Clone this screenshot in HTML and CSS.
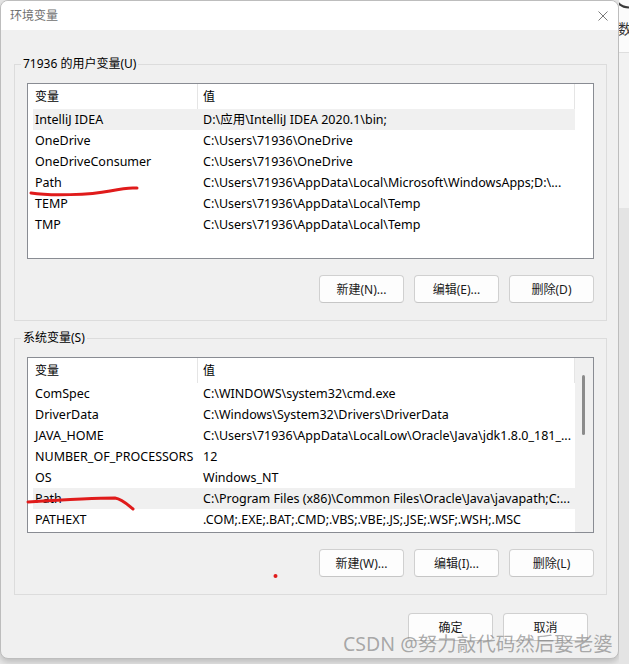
FILE: index.html
```html
<!DOCTYPE html>
<html lang="zh-CN">
<head>
<meta charset="utf-8">
<title>环境变量</title>
<link rel="stylesheet" href="styles.css">
</head>
<body>
<div class="screen">
  <div class="window">
    <div class="titlebar">
      <span class="title">环境变量</span>
      <svg class="close" width="10" height="10" viewBox="0 0 10 10"><path d="M0.5 0.5L9.5 9.5M9.5 0.5L0.5 9.5" stroke="#7a7a7a" stroke-width="1" fill="none"/></svg>
    </div>
    <div class="content">
      <fieldset class="group">
        <legend>71936 的用户变量(U)</legend>
        <div class="listbox">
          <div class="table">
            <div class="head"><div class="hc">变量</div><div class="hc">值</div></div>
            <div class="row sel"><div class="c1">IntelliJ IDEA</div><div class="c2">D:\应用\IntelliJ IDEA 2020.1\bin;</div></div>
            <div class="row"><div class="c1">OneDrive</div><div class="c2">C:\Users\71936\OneDrive</div></div>
            <div class="row"><div class="c1">OneDriveConsumer</div><div class="c2">C:\Users\71936\OneDrive</div></div>
            <div class="row"><div class="c1">Path</div><div class="c2">C:\Users\71936\AppData\Local\Microsoft\WindowsApps;D:\...</div></div>
            <div class="row"><div class="c1">TEMP</div><div class="c2">C:\Users\71936\AppData\Local\Temp</div></div>
            <div class="row"><div class="c1">TMP</div><div class="c2">C:\Users\71936\AppData\Local\Temp</div></div>
          </div>
          <div class="gutter"></div>
        </div>
        <div class="buttons">
          <button class="btn">新建(N)...</button>
          <button class="btn">编辑(E)...</button>
          <button class="btn">删除(D)</button>
        </div>
      </fieldset>
      <fieldset class="group">
        <legend>系统变量(S)</legend>
        <div class="listbox">
          <div class="table">
            <div class="head"><div class="hc">变量</div><div class="hc">值</div></div>
            <div class="row"><div class="c1">ComSpec</div><div class="c2">C:\WINDOWS\system32\cmd.exe</div></div>
            <div class="row"><div class="c1">DriverData</div><div class="c2">C:\Windows\System32\Drivers\DriverData</div></div>
            <div class="row"><div class="c1">JAVA_HOME</div><div class="c2">C:\Users\71936\AppData\LocalLow\Oracle\Java\jdk1.8.0_181_...</div></div>
            <div class="row"><div class="c1">NUMBER_OF_PROCESSORS</div><div class="c2">12</div></div>
            <div class="row"><div class="c1">OS</div><div class="c2">Windows_NT</div></div>
            <div class="row sel"><div class="c1">Path</div><div class="c2">C:\Program Files (x86)\Common Files\Oracle\Java\javapath;C:...</div></div>
            <div class="row"><div class="c1">PATHEXT</div><div class="c2">.COM;.EXE;.BAT;.CMD;.VBS;.VBE;.JS;.JSE;.WSF;.WSH;.MSC</div></div>
          </div>
          <div class="gutter track"><div class="thumb"></div></div>
        </div>
        <div class="buttons">
          <button class="btn">新建(W)...</button>
          <button class="btn">编辑(I)...</button>
          <button class="btn">删除(L)</button>
        </div>
      </fieldset>
      <div class="footer">
        <button class="btn">确定</button>
        <button class="btn">取消</button>
      </div>
    </div>
  </div>
  <div class="side">
    <div class="side-top">
      <svg class="arc" width="10" height="10" viewBox="0 0 10 10"><path d="M-3 0 Q1 7 10 7.5" stroke="#3a3a3a" stroke-width="2.2" fill="none"/></svg>
      <span class="peek">数</span>
    </div>
    <div class="side-mid"></div>
    <div class="side-bot"></div>
  </div>
</div>
<svg class="marks" width="629" height="664" viewBox="0 0 629 664">
  <path d="M31 193 C50 196 90 195 110 191 S130 188 137 188" stroke="#e01b1b" stroke-width="3" fill="none" stroke-linecap="round"/>
  <path d="M28 502 C60 500 95 498 115 498 C122 499 128 505 133 509" stroke="#e01b1b" stroke-width="3" fill="none" stroke-linecap="round"/>
  <circle cx="275.5" cy="576" r="2" fill="#e01b1b"/>
</svg>
<div class="watermark">CSDN @努力敲代码然后娶老婆</div>
</body>
</html>
```
FILE: styles.css
```css
html, body {
  margin: 0;
  padding: 0;
}
body {
  width: 629px;
  height: 664px;
  overflow: hidden;
  position: relative;
  background: #e8e8e8;
  font-family: "Noto Sans", "Noto Sans CJK SC", sans-serif;
  font-size: 12px;
  color: #000;
}
.screen {
  display: flex;
  height: 664px;
}
.window {
  flex: none;
  width: 619px;
  box-sizing: border-box;
  border: 1px solid #bdbdbd;
  border-radius: 8px;
  background: #f0f0f0;
  box-shadow: 0 3px 7px rgba(0, 0, 0, 0.2);
  overflow: hidden;
  align-self: flex-start;
}
.titlebar {
  height: 29px;
  background: #fff;
  display: flex;
  align-items: center;
  justify-content: space-between;
  padding: 0 10px 0 9px;
}
.title {
  color: #707070;
  font-size: 12px;
  line-height: 16px;
}
.close {
  display: block;
}
.content {
  padding: 26px 11px 17px 13px;
}
.group {
  margin: 0;
  padding: 11px 12px 17px;
  border: 1px solid #dcdcdc;
  min-width: 0;
}
.group + .group {
  margin-top: 9px;
}
.group legend {
  padding: 0 2px;
  margin-left: -6px;
  line-height: 16px;
  font-size: 12px;
}
.listbox {
  height: 176px;
  box-sizing: border-box;
  border: 1px solid #898c93;
  background: #fff;
  display: flex;
  overflow: hidden;
}
.table {
  flex: none;
  width: 547px;
  overflow: hidden;
}
.gutter {
  flex: 1;
}
.gutter.track {
  background: #f0f0f0;
}
.thumb {
  margin: 17px 0 0 7px;
  width: 3px;
  height: 60px;
  border-radius: 2px;
  background: #8b8b8b;
}
.head {
  display: grid;
  grid-template-columns: 170px 377px;
  height: 25px;
}
.hc {
  box-sizing: border-box;
  border-right: 1px solid #e5e5e5;
  line-height: 25px;
  padding-left: 7px;
}
.hc + .hc {
  padding-left: 5px;
}
.row {
  display: grid;
  grid-template-columns: 165px 377px;
  height: 21px;
  line-height: 21px;
  margin-left: 5px;
  white-space: nowrap;
  font-size: 12.5px;
}
.row.sel {
  background: #f0f0f0;
}
.c1, .c2 {
  overflow: hidden;
}
.c1 {
  padding-left: 2px;
}
.c2 {
  padding-left: 5px;
}
.buttons {
  display: flex;
  justify-content: flex-end;
  gap: 10px;
  margin-top: 16px;
}
.btn {
  width: 85px;
  height: 28px;
  box-sizing: border-box;
  padding: 0;
  border: 1px solid #d0d0d0;
  border-bottom-color: #c6c6c6;
  border-radius: 4px;
  background: #fdfdfd;
  font-family: inherit;
  font-size: 12px;
  color: #1a1a1a;
}
.footer {
  display: flex;
  justify-content: flex-end;
  gap: 10px;
  margin-top: 18px;
  padding-right: 19px;
}
.side {
  flex: 1;
  display: flex;
  flex-direction: column;
  overflow: hidden;
}
.side-top {
  height: 52px;
  background: #fbfbfb;
  border-bottom: 1px solid #dedede;
}
.arc {
  display: block;
}
.peek {
  display: block;
  margin: 11px 0 0 -1px;
  font-size: 14px;
  line-height: 16px;
  color: #333;
  white-space: nowrap;
}
.side-mid {
  height: 155px;
  background: #f2f2f2;
}
.side-bot {
  flex: 1;
  background: #e4e4e4;
}
.marks {
  position: absolute;
  left: 0;
  top: 0;
  pointer-events: none;
}
.watermark {
  position: absolute;
  left: 343px;
  top: 631px;
  font-size: 19.5px;
  line-height: 26px;
  color: rgba(120, 120, 120, 0.62);
  white-space: nowrap;
  pointer-events: none;
}
```
